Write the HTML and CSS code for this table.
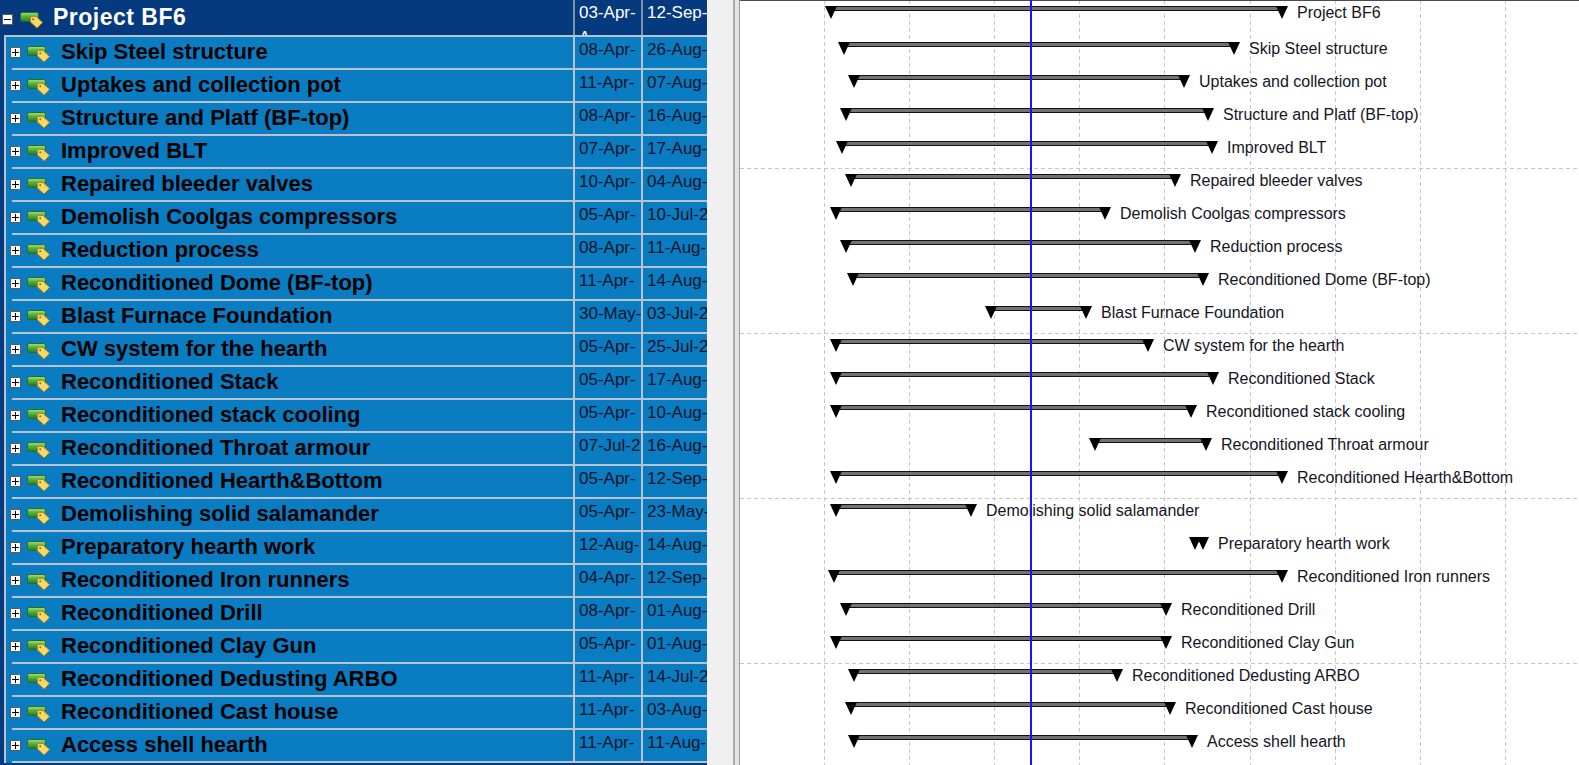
FILE: index.html
```html
<!DOCTYPE html>
<html lang="en">
<head>
<meta charset="utf-8">
<title>Project BF6</title>
<link rel="stylesheet" href="styles.css">
</head>
<body>
<svg class="defs" width="0" height="0" aria-hidden="true">
  <defs>
    <linearGradient id="grn" x1="0" y1="0" x2="0" y2="1">
      <stop offset="0" stop-color="#a6e27f"/>
      <stop offset="0.45" stop-color="#52b33d"/>
      <stop offset="1" stop-color="#2a7a22"/>
    </linearGradient>
    <symbol id="ico" viewBox="0 0 24 17">
      <rect x="0.5" y="0.5" width="18" height="9" rx="2" fill="url(#grn)" stroke="#2b6a22"/>
      <path d="M10.5 4.5 L16 4.5 L22.5 10.5 L17 16 L10.5 10 Z" fill="#f7d865" stroke="#b38a1c"/>
      <circle cx="13.2" cy="7.2" r="1" fill="#8a6a10"/>
    </symbol>
  </defs>
</svg>
<div class="app">
  <div class="table">
    <div class="hrow">
      <div class="hname"><span class="tog"></span><svg class="ico" width="24" height="17"><use href="#ico"/></svg><span class="htext">Project BF6</span></div>
      <div class="hdate"><span class="ln">03-Apr-</span><span class="ln">A</span></div>
      <div class="hdate last"><span class="ln">12-Sep-</span></div>
    </div>
    <div class="kids">
      <div class="row"><div class="name"><span class="tog plus"></span><svg class="ico" width="24" height="17"><use href="#ico"/></svg><span class="txt">Skip Steel structure</span></div><div class="date">08-Apr-</div><div class="date last">26-Aug-</div></div>
      <div class="row"><div class="name"><span class="tog plus"></span><svg class="ico" width="24" height="17"><use href="#ico"/></svg><span class="txt">Uptakes and collection pot</span></div><div class="date">11-Apr-</div><div class="date last">07-Aug-</div></div>
      <div class="row"><div class="name"><span class="tog plus"></span><svg class="ico" width="24" height="17"><use href="#ico"/></svg><span class="txt">Structure and Platf (BF-top)</span></div><div class="date">08-Apr-</div><div class="date last">16-Aug-</div></div>
      <div class="row"><div class="name"><span class="tog plus"></span><svg class="ico" width="24" height="17"><use href="#ico"/></svg><span class="txt">Improved BLT</span></div><div class="date">07-Apr-</div><div class="date last">17-Aug-</div></div>
      <div class="row"><div class="name"><span class="tog plus"></span><svg class="ico" width="24" height="17"><use href="#ico"/></svg><span class="txt">Repaired bleeder valves</span></div><div class="date">10-Apr-</div><div class="date last">04-Aug-</div></div>
      <div class="row"><div class="name"><span class="tog plus"></span><svg class="ico" width="24" height="17"><use href="#ico"/></svg><span class="txt">Demolish Coolgas compressors</span></div><div class="date">05-Apr-</div><div class="date last">10-Jul-2</div></div>
      <div class="row"><div class="name"><span class="tog plus"></span><svg class="ico" width="24" height="17"><use href="#ico"/></svg><span class="txt">Reduction process</span></div><div class="date">08-Apr-</div><div class="date last">11-Aug-</div></div>
      <div class="row"><div class="name"><span class="tog plus"></span><svg class="ico" width="24" height="17"><use href="#ico"/></svg><span class="txt">Reconditioned Dome (BF-top)</span></div><div class="date">11-Apr-</div><div class="date last">14-Aug-</div></div>
      <div class="row"><div class="name"><span class="tog plus"></span><svg class="ico" width="24" height="17"><use href="#ico"/></svg><span class="txt">Blast Furnace Foundation</span></div><div class="date">30-May-</div><div class="date last">03-Jul-2</div></div>
      <div class="row"><div class="name"><span class="tog plus"></span><svg class="ico" width="24" height="17"><use href="#ico"/></svg><span class="txt">CW system for the hearth</span></div><div class="date">05-Apr-</div><div class="date last">25-Jul-2</div></div>
      <div class="row"><div class="name"><span class="tog plus"></span><svg class="ico" width="24" height="17"><use href="#ico"/></svg><span class="txt">Reconditioned Stack</span></div><div class="date">05-Apr-</div><div class="date last">17-Aug-</div></div>
      <div class="row"><div class="name"><span class="tog plus"></span><svg class="ico" width="24" height="17"><use href="#ico"/></svg><span class="txt">Reconditioned stack cooling</span></div><div class="date">05-Apr-</div><div class="date last">10-Aug-</div></div>
      <div class="row"><div class="name"><span class="tog plus"></span><svg class="ico" width="24" height="17"><use href="#ico"/></svg><span class="txt">Reconditioned Throat armour</span></div><div class="date">07-Jul-2</div><div class="date last">16-Aug-</div></div>
      <div class="row"><div class="name"><span class="tog plus"></span><svg class="ico" width="24" height="17"><use href="#ico"/></svg><span class="txt">Reconditioned Hearth&amp;Bottom</span></div><div class="date">05-Apr-</div><div class="date last">12-Sep-</div></div>
      <div class="row"><div class="name"><span class="tog plus"></span><svg class="ico" width="24" height="17"><use href="#ico"/></svg><span class="txt">Demolishing solid salamander</span></div><div class="date">05-Apr-</div><div class="date last">23-May-</div></div>
      <div class="row"><div class="name"><span class="tog plus"></span><svg class="ico" width="24" height="17"><use href="#ico"/></svg><span class="txt">Preparatory hearth work</span></div><div class="date">12-Aug-</div><div class="date last">14-Aug-</div></div>
      <div class="row"><div class="name"><span class="tog plus"></span><svg class="ico" width="24" height="17"><use href="#ico"/></svg><span class="txt">Reconditioned Iron runners</span></div><div class="date">04-Apr-</div><div class="date last">12-Sep-</div></div>
      <div class="row"><div class="name"><span class="tog plus"></span><svg class="ico" width="24" height="17"><use href="#ico"/></svg><span class="txt">Reconditioned Drill</span></div><div class="date">08-Apr-</div><div class="date last">01-Aug-</div></div>
      <div class="row"><div class="name"><span class="tog plus"></span><svg class="ico" width="24" height="17"><use href="#ico"/></svg><span class="txt">Reconditioned Clay Gun</span></div><div class="date">05-Apr-</div><div class="date last">01-Aug-</div></div>
      <div class="row"><div class="name"><span class="tog plus"></span><svg class="ico" width="24" height="17"><use href="#ico"/></svg><span class="txt">Reconditioned Dedusting ARBO</span></div><div class="date">11-Apr-</div><div class="date last">14-Jul-2</div></div>
      <div class="row"><div class="name"><span class="tog plus"></span><svg class="ico" width="24" height="17"><use href="#ico"/></svg><span class="txt">Reconditioned Cast house</span></div><div class="date">11-Apr-</div><div class="date last">03-Aug-</div></div>
      <div class="row"><div class="name"><span class="tog plus"></span><svg class="ico" width="24" height="17"><use href="#ico"/></svg><span class="txt">Access shell hearth</span></div><div class="date">11-Apr-</div><div class="date last">11-Aug-</div></div>
    </div>
  </div>
  <div class="split"><div class="grip"></div></div>
  <div class="gantt">
    <div class="grow first" style="--s:91;--e:542"><div class="task"><i class="bar"></i><i class="tri l"></i><i class="tri r"></i></div><span class="glabel">Project BF6</span></div>
    <div class="grow" style="--s:104;--e:494"><div class="task"><i class="bar"></i><i class="tri l"></i><i class="tri r"></i></div><span class="glabel">Skip Steel structure</span></div>
    <div class="grow" style="--s:114;--e:444"><div class="task"><i class="bar"></i><i class="tri l"></i><i class="tri r"></i></div><span class="glabel">Uptakes and collection pot</span></div>
    <div class="grow" style="--s:106;--e:468"><div class="task"><i class="bar"></i><i class="tri l"></i><i class="tri r"></i></div><span class="glabel">Structure and Platf (BF-top)</span></div>
    <div class="grow" style="--s:102;--e:472"><div class="task"><i class="bar"></i><i class="tri l"></i><i class="tri r"></i></div><span class="glabel">Improved BLT</span></div>
    <div class="grow sep" style="--s:111;--e:435"><div class="task"><i class="bar"></i><i class="tri l"></i><i class="tri r"></i></div><span class="glabel">Repaired bleeder valves</span></div>
    <div class="grow" style="--s:96;--e:365"><div class="task"><i class="bar"></i><i class="tri l"></i><i class="tri r"></i></div><span class="glabel">Demolish Coolgas compressors</span></div>
    <div class="grow" style="--s:106;--e:455"><div class="task"><i class="bar"></i><i class="tri l"></i><i class="tri r"></i></div><span class="glabel">Reduction process</span></div>
    <div class="grow" style="--s:113;--e:463"><div class="task"><i class="bar"></i><i class="tri l"></i><i class="tri r"></i></div><span class="glabel">Reconditioned Dome (BF-top)</span></div>
    <div class="grow" style="--s:251;--e:346"><div class="task"><i class="bar"></i><i class="tri l"></i><i class="tri r"></i></div><span class="glabel">Blast Furnace Foundation</span></div>
    <div class="grow sep" style="--s:96;--e:408"><div class="task"><i class="bar"></i><i class="tri l"></i><i class="tri r"></i></div><span class="glabel">CW system for the hearth</span></div>
    <div class="grow" style="--s:96;--e:473"><div class="task"><i class="bar"></i><i class="tri l"></i><i class="tri r"></i></div><span class="glabel">Reconditioned Stack</span></div>
    <div class="grow" style="--s:96;--e:451"><div class="task"><i class="bar"></i><i class="tri l"></i><i class="tri r"></i></div><span class="glabel">Reconditioned stack cooling</span></div>
    <div class="grow" style="--s:355;--e:466"><div class="task"><i class="bar"></i><i class="tri l"></i><i class="tri r"></i></div><span class="glabel">Reconditioned Throat armour</span></div>
    <div class="grow" style="--s:96;--e:542"><div class="task"><i class="bar"></i><i class="tri l"></i><i class="tri r"></i></div><span class="glabel">Reconditioned Hearth&amp;Bottom</span></div>
    <div class="grow sep" style="--s:96;--e:231"><div class="task"><i class="bar"></i><i class="tri l"></i><i class="tri r"></i></div><span class="glabel">Demolishing solid salamander</span></div>
    <div class="grow" style="--s:455;--e:463"><div class="task"><i class="bar"></i><i class="tri l"></i><i class="tri r"></i></div><span class="glabel">Preparatory hearth work</span></div>
    <div class="grow" style="--s:94;--e:542"><div class="task"><i class="bar"></i><i class="tri l"></i><i class="tri r"></i></div><span class="glabel">Reconditioned Iron runners</span></div>
    <div class="grow" style="--s:106;--e:426"><div class="task"><i class="bar"></i><i class="tri l"></i><i class="tri r"></i></div><span class="glabel">Reconditioned Drill</span></div>
    <div class="grow" style="--s:96;--e:426"><div class="task"><i class="bar"></i><i class="tri l"></i><i class="tri r"></i></div><span class="glabel">Reconditioned Clay Gun</span></div>
    <div class="grow sep" style="--s:114;--e:377"><div class="task"><i class="bar"></i><i class="tri l"></i><i class="tri r"></i></div><span class="glabel">Reconditioned Dedusting ARBO</span></div>
    <div class="grow" style="--s:111;--e:430"><div class="task"><i class="bar"></i><i class="tri l"></i><i class="tri r"></i></div><span class="glabel">Reconditioned Cast house</span></div>
    <div class="grow" style="--s:114;--e:452"><div class="task"><i class="bar"></i><i class="tri l"></i><i class="tri r"></i></div><span class="glabel">Access shell hearth</span></div>
    <div class="today"></div>
  </div>
</div>
</body>
</html>
```
FILE: styles.css
```css
* { box-sizing: border-box; }
html, body { margin: 0; padding: 0; height: 100%; overflow: hidden; }
body { font-family: "Liberation Sans", Arial, sans-serif; background: #fff; }

.defs { position: absolute; width: 0; height: 0; overflow: hidden; }

.app { display: flex; width: 1579px; height: 765px; overflow: hidden; }

/* ---------- task table ---------- */
.table { width: 707px; flex: none; background: #053a7e; overflow: hidden; }

.hrow { display: flex; height: 35px; }
.hname {
  width: 575px; flex: none; display: flex; align-items: flex-start;
  border-right: 2px solid #7f93ad;
}
.hname .tog { margin: 14px 0 0 2px; }
.hname .ico { margin: 12px 0 0 7px; }
.htext {
  margin-left: 9px; font-weight: bold; font-size: 23px; line-height: 35px;
  letter-spacing: 0.5px; color: #fff; white-space: nowrap;
}
.hdate {
  width: 68px; flex: none; padding-left: 4px; overflow: hidden;
  border-right: 2px solid #7f93ad;
  color: #fff; font-size: 17px; line-height: 25px;
}
.hdate.last { width: 64px; border-right: 0; }
.ln { display: block; white-space: nowrap; }

.kids {
  margin-left: 4px; background: #0a7cc1;
  border-left: 2px solid #b8c3cd; border-top: 2px solid #b8c3cd;
}
.row { display: flex; height: 33px; }
.name {
  width: 569px; flex: none; position: relative; display: flex; align-items: flex-start;
  padding-bottom: 2px; border-right: 2px solid #b8c3cd;
}
.name::after {
  content: ""; position: absolute; left: 6px; right: 0; bottom: 0; height: 2px;
  background: #b8c3cd;
}
.name .tog { margin: 10px 0 0 4px; }
.name .ico { margin: 9px 0 0 6px; }
.txt {
  margin-left: 10px; font-weight: bold; font-size: 22px; line-height: 30px;
  color: #000; white-space: nowrap;
}
.date {
  width: 68px; flex: none; padding-left: 4px; overflow: hidden; white-space: nowrap;
  border-right: 2px solid #b8c3cd; border-bottom: 2px solid #b8c3cd;
  color: #071428; font-size: 17px; line-height: 25px;
}
.date.last { width: 64px; border-right: 0; }

.tog {
  flex: none; position: relative; width: 11px; height: 11px;
  background: #fff; border: 1px solid #5c5c5c;
}
.tog::before {
  content: ""; position: absolute; left: 1px; right: 1px; top: 4px; height: 1px; background: #000;
}
.tog.plus::after {
  content: ""; position: absolute; top: 1px; bottom: 1px; left: 4px; width: 1px; background: #000;
}
.ico { flex: none; display: block; }

/* ---------- splitter ---------- */
.split { width: 33px; flex: none; background: #f0f0f0; display: flex; }
.grip {
  margin-left: 26px; width: 7px;
  border-left: 2px solid #ababab; border-right: 1px solid #9a9a9a; background: #e4e4e4;
}

/* ---------- gantt ---------- */
.gantt {
  flex: 1; position: relative; overflow: hidden;
  background-color: #fff;
  background-image:
    repeating-linear-gradient(to bottom, transparent 0 4px, #fff 4px 7px),
    repeating-linear-gradient(to right, transparent 0 84.1px, #c6c6c6 84.1px 85.1px);
  box-shadow: inset 0 1px 0 #4a4a4a;
}
.grow { position: relative; height: 33px; }
.grow.first { height: 36px; }
.grow.sep::before {
  content: ""; position: absolute; left: 0; right: 0; top: 0; height: 1px;
  background: repeating-linear-gradient(to right, #c6c6c6 0 4px, transparent 4px 7px);
}
.task {
  position: absolute; top: 6px; height: 13px;
  left: calc(var(--s) * 1px - 6px);
  width: calc((var(--e) - var(--s)) * 1px + 12px);
}
.bar {
  position: absolute; left: 6px; right: 6px; top: 0; height: 5px;
  border-top: 1px solid #111; border-bottom: 1px solid #111; background: #727272;
}
.tri {
  position: absolute; top: 0; width: 12px; height: 13px; background: #000;
  clip-path: polygon(0 0, 100% 0, 50% 100%);
}
.tri.l { left: 0; }
.tri.r { right: 0; }
.glabel {
  position: absolute; top: 4px; left: calc(var(--e) * 1px + 15px);
  font-size: 16px; line-height: 18px; color: #15151f; white-space: nowrap;
}
.today {
  position: absolute; left: 290px; top: 0; bottom: 0; width: 2px;
  background: #1414ff; z-index: 2;
}
```
